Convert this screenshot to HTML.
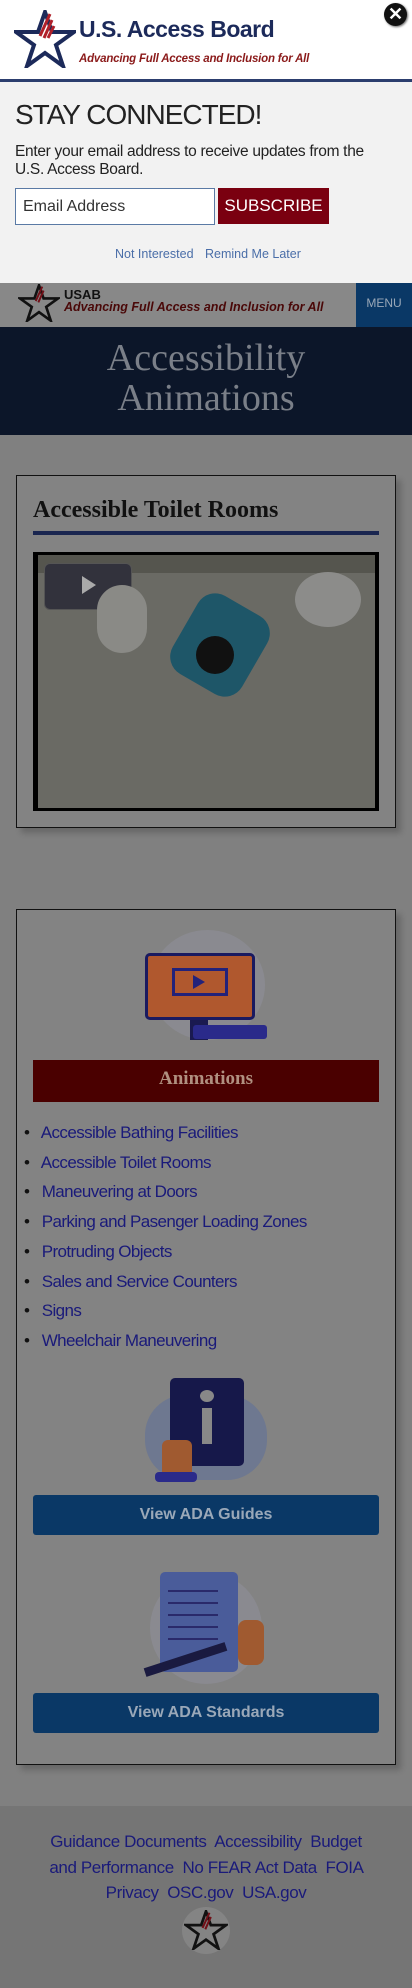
<!DOCTYPE html>
<html><head><meta charset="utf-8"><style>
*{box-sizing:border-box;margin:0;padding:0}
body{width:412px;height:1988px;background:#808080;font-family:"Liberation Sans",sans-serif;position:relative;overflow:hidden}
.abs{position:absolute}
a{color:#1a1a7a}
</style></head><body>
<!-- popup header -->
<div class="abs" style="left:0;top:0;width:412px;height:80px;background:#fff"></div>
<svg class="abs" style="left:14px;top:10px" width="62" height="58" viewBox="0 0 62 58"><path d="M2 22 L24 22 L31 2 L38 22 L60 22 L42 35 L49 56 L31 43 L13 56 L20 35 Z" fill="none" stroke="#1c2a5a" stroke-width="4"/><path d="M26 26 L36 4 M30 28 L38 10 M34 28 L40 16" stroke="#b0202a" stroke-width="3"/></svg>
<div class="abs" style="left:79px;top:16px;font-size:23px;font-weight:bold;color:#1c2a5a;letter-spacing:-0.5px">U.S. Access Board</div>
<div class="abs" style="left:79px;top:53px;font-size:11.5px;font-weight:bold;font-style:italic;color:#8b1a1a;letter-spacing:-0.2px">Advancing Full Access and Inclusion for All</div>
<div class="abs" style="left:384px;top:3px;width:23px;height:23px;border-radius:50%;background:#111;color:#fff;font-size:18px;font-weight:bold;text-align:center;line-height:23px;box-shadow:1px 1px 2px #666">✕</div>
<div class="abs" style="left:0;top:79px;width:412px;height:3px;background:#2c3e6e"></div>
<div class="abs" style="left:0;top:82px;width:412px;height:201px;background:#f2f2f2"></div>
<div class="abs" style="left:15px;top:99px;font-size:28px;color:#222;letter-spacing:-1px">STAY CONNECTED!</div>
<div class="abs" style="left:15px;top:143px;font-size:15.5px;color:#222;line-height:18px;width:368px;letter-spacing:-0.3px">Enter your email address to receive updates from the U.S. Access Board.</div>
<div class="abs" style="left:15px;top:188px;width:200px;height:37px;border:1px solid #5a7aa5;background:#fff;font-size:16px;color:#333;padding:9px 7px">Email Address</div>
<div class="abs" style="left:218px;top:188px;width:111px;height:36px;background:#7a0010;color:#fff;font-size:17px;text-align:center;line-height:36px">SUBSCRIBE</div>
<div class="abs" style="left:115px;top:247px;font-size:12.5px;color:#4a6ea8">Not Interested</div>
<div class="abs" style="left:205px;top:247px;font-size:12.5px;color:#4a6ea8">Remind Me Later</div>
<!-- nav -->
<div class="abs" style="left:0;top:283px;width:356px;height:44px;background:#888"></div>
<svg class="abs" style="left:18px;top:284px" width="42" height="38" viewBox="0 0 62 58"><path d="M2 22 L24 22 L31 2 L38 22 L60 22 L42 35 L49 56 L31 43 L13 56 L20 35 Z" fill="none" stroke="#111" stroke-width="4"/><path d="M26 26 L36 4 M30 28 L38 10" stroke="#701018" stroke-width="3"/></svg>
<div class="abs" style="left:64px;top:287px;font-size:13px;font-weight:bold;color:#111">USAB</div>
<div class="abs" style="left:64px;top:300px;font-size:12.5px;font-weight:bold;font-style:italic;color:#4a0808">Advancing Full Access and Inclusion for All</div>
<div class="abs" style="left:356px;top:283px;width:56px;height:44px;background:#0a3866;color:#9aa8b8;font-size:12px;text-align:center;line-height:40px">MENU</div>
<div class="abs" style="left:0;top:327px;width:412px;height:108px;background:#0c1629"></div>
<div class="abs" style="left:0;top:338px;width:412px;text-align:center;font-family:'Liberation Serif',serif;font-size:38px;line-height:40px;color:#7a7f88">Accessibility<br>Animations</div>
<!-- card 1 -->
<div class="abs" style="left:16px;top:475px;width:380px;height:353px;border:1px solid #111;background:#838383;box-shadow:5px 5px 6px rgba(0,0,0,.2)"></div>
<div class="abs" style="left:33px;top:497px;font-family:'Liberation Serif',serif;font-weight:bold;font-size:24px;color:#111">Accessible Toilet Rooms</div>
<div class="abs" style="left:33px;top:531px;width:346px;height:4px;background:#1a2650"></div>
<div class="abs" style="left:33px;top:552px;width:346px;height:259px;background:#000"></div>
<div class="abs" style="left:38px;top:555px;width:337px;height:253px;background:#6a6a64"></div>
<div class="abs" style="left:38px;top:555px;width:337px;height:18px;background:#55554e"></div>
<div class="abs" style="left:44px;top:563px;width:88px;height:47px;border-radius:6px;background:#32323c;border:1px solid #555"></div>
<div class="abs" style="left:82px;top:576px;width:0;height:0;border-left:14px solid #aaa;border-top:9px solid transparent;border-bottom:9px solid transparent"></div>
<div class="abs" style="left:97px;top:585px;width:50px;height:68px;border-radius:25px;background:#8a8a86"></div>
<div class="abs" style="left:295px;top:572px;width:66px;height:55px;border-radius:50%;background:#8c8c8a"></div>
<div class="abs" style="left:180px;top:600px;width:80px;height:90px;background:#1e5668;transform:rotate(30deg);border-radius:20px"></div>
<div class="abs" style="left:196px;top:636px;width:38px;height:38px;background:#111;border-radius:50%"></div>
<!-- card 2 -->
<div class="abs" style="left:16px;top:909px;width:380px;height:856px;border:1px solid #111;background:#838383;box-shadow:5px 5px 6px rgba(0,0,0,.2)"></div>
<div class="abs" style="left:150px;top:930px;width:115px;height:110px;border-radius:50%;background:#8a8a90"></div>
<div class="abs" style="left:145px;top:953px;width:110px;height:67px;background:#b0582e;border:3px solid #1a1a60;border-radius:5px"></div>
<div class="abs" style="left:172px;top:968px;width:56px;height:28px;border:3px solid #22227a"></div>
<div class="abs" style="left:193px;top:975px;width:0;height:0;border-left:12px solid #22227a;border-top:7px solid transparent;border-bottom:7px solid transparent"></div>
<div class="abs" style="left:190px;top:1020px;width:18px;height:20px;background:#1a1a50"></div>
<div class="abs" style="left:193px;top:1025px;width:74px;height:14px;background:#2a2a8a;border-radius:3px"></div>
<div class="abs" style="left:33px;top:1060px;width:346px;height:42px;background:#4a0000"></div>
<div class="abs" style="left:33px;top:1068px;width:346px;text-align:center;font-family:'Liberation Serif',serif;font-weight:bold;font-size:19px;color:#b09080">Animations</div>
<div class="abs" style="left:24px;top:1118px;font-size:17px;letter-spacing:-0.6px;line-height:29.7px;color:#111">
<div>•&nbsp;&nbsp; <a>Accessible Bathing Facilities</a></div>
<div>•&nbsp;&nbsp; <a>Accessible Toilet Rooms</a></div>
<div>•&nbsp;&nbsp; <a>Maneuvering at Doors</a></div>
<div>•&nbsp;&nbsp; <a>Parking and Pasenger Loading Zones</a></div>
<div>•&nbsp;&nbsp; <a>Protruding Objects</a></div>
<div>•&nbsp;&nbsp; <a>Sales and Service Counters</a></div>
<div>•&nbsp;&nbsp; <a>Signs</a></div>
<div>•&nbsp;&nbsp; <a>Wheelchair Maneuvering</a></div>
</div>
<!-- info image -->
<div class="abs" style="left:145px;top:1395px;width:122px;height:85px;border-radius:40px;background:#6e7890"></div>
<div class="abs" style="left:170px;top:1378px;width:74px;height:88px;background:#16184a;border-radius:5px"></div>
<div class="abs" style="left:200px;top:1390px;width:14px;height:12px;border-radius:50%;background:#888"></div>
<div class="abs" style="left:202px;top:1408px;width:10px;height:36px;background:#888"></div>
<div class="abs" style="left:162px;top:1440px;width:30px;height:38px;background:#a05a30;border-radius:6px"></div>
<div class="abs" style="left:155px;top:1472px;width:42px;height:10px;background:#2a2a8a;border-radius:4px"></div>
<div class="abs" style="left:33px;top:1495px;width:346px;height:40px;background:#0a3866;border-radius:3px;color:#9aa8b8;font-weight:bold;font-size:16px;text-align:center;line-height:40px">View ADA Guides</div>
<!-- standards image -->
<div class="abs" style="left:150px;top:1572px;width:112px;height:112px;border-radius:50%;background:#8a8a90"></div>
<div class="abs" style="left:160px;top:1572px;width:78px;height:100px;background:#4a5c9a;border-radius:5px"></div>
<div class="abs" style="left:168px;top:1590px;width:50px;height:2px;background:#2a2a6a;box-shadow:0 12px 0 #2a2a6a,0 24px 0 #2a2a6a,0 36px 0 #2a2a6a,0 48px 0 #2a2a6a"></div>
<div class="abs" style="left:238px;top:1620px;width:26px;height:45px;background:#a05a30;border-radius:8px"></div>
<div class="abs" style="left:143px;top:1655px;width:85px;height:9px;background:#1a1a40;transform:rotate(-18deg)"></div>
<div class="abs" style="left:33px;top:1693px;width:346px;height:40px;background:#0a3866;border-radius:3px;color:#9aa8b8;font-weight:bold;font-size:16px;text-align:center;line-height:40px">View ADA Standards</div>
<!-- footer -->
<div class="abs" style="left:0;top:1806px;width:412px;height:182px;background:#757575"></div>
<div class="abs" style="left:46px;top:1829px;width:320px;text-align:center;font-size:17px;letter-spacing:-0.4px;line-height:25.5px;color:#1a1a7a"><a>Guidance Documents</a>&nbsp; <a>Accessibility</a>&nbsp; <a>Budget and Performance</a>&nbsp; <a>No FEAR Act Data</a>&nbsp; <a>FOIA</a> <a>Privacy</a>&nbsp; <a>OSC.gov</a>&nbsp; <a>USA.gov</a></div>
<div class="abs" style="left:182px;top:1907px;width:48px;height:47px;border-radius:50%;background:#848484"></div>
<svg class="abs" style="left:184px;top:1910px" width="44" height="40" viewBox="0 0 62 58"><path d="M2 22 L24 22 L31 2 L38 22 L60 22 L42 35 L49 56 L31 43 L13 56 L20 35 Z" fill="none" stroke="#111" stroke-width="4"/><path d="M26 26 L36 4 M30 28 L38 10" stroke="#701018" stroke-width="3"/></svg>
</body></html>
